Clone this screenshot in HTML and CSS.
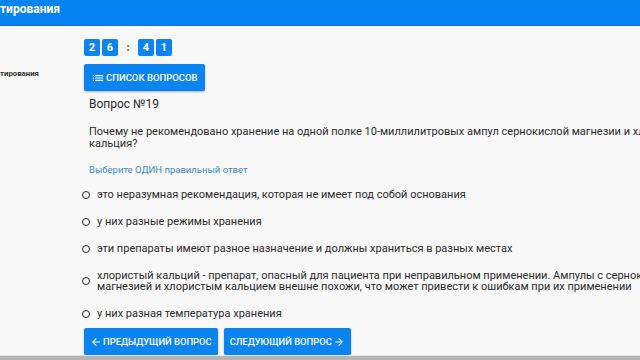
FILE: index.html
```html
<!DOCTYPE html>
<html>
	<head>
		<meta charset="utf-8">
		<title>Тестирование</title>
		<link rel="stylesheet" href="styles.css">
	</head>

	<body>
		<header class="topbar">
			<span class="topbar-title">тирования</span>
		</header>

		<main class="layout">
			<div class="side"></div>
			<div class="timer">
				<span class="digit">2</span><span class="digit">6</span>
				<span class="colon">:</span>
				<span class="digit">4</span><span class="digit">1</span>
			</div>

			<div class="side">
				<span class="side-label">тирования</span>
			</div>
			<div class="row-btn">
				<button class="btn">
					<svg class="ico ico-list" viewBox="0 0 24 24"><path d="M3 13h2v-2H3v2zm0 4h2v-2H3v2zm0-8h2V7H3v2zm4 4h14v-2H7v2zm0 4h14v-2H7v2zM7 7v2h14V7H7z"/></svg>Список вопросов
				</button>
			</div>

			<div class="side"></div>
			<div class="quiz">
				<p class="q-num">Вопрос №19</p>
				<p class="q-text">Почему не рекомендовано хранение на одной полке 10-миллилитровых ампул сернокислой магнезии и хлористого кальция?</p>
				<p class="q-hint">Выберите ОДИН правильный ответ</p>

				<ul class="answers">
					<li class="answer"><span class="radio"></span><span class="answer-text">это неразумная рекомендация, которая не имеет под собой основания</span></li>
					<li class="answer"><span class="radio"></span><span class="answer-text">у них разные режимы хранения</span></li>
					<li class="answer"><span class="radio"></span><span class="answer-text">эти препараты имеют разное назначение и должны храниться в разных местах</span></li>
					<li class="answer"><span class="radio"></span><span class="answer-text">хлористый кальций - препарат, опасный для пациента при неправильном применении. Ампулы с сернокислой магнезией и хлористым кальцием внешне похожи, что может привести к ошибкам при их применении</span></li>
					<li class="answer"><span class="radio"></span><span class="answer-text">у них разная температура хранения</span></li>
				</ul>

				<div class="nav">
					<button class="btn btn-nav">
						<svg class="ico" viewBox="0 0 24 24"><path d="M20 11H7.83l5.59-5.59L12 4l-8 8 8 8 1.41-1.41L7.83 13H20v-2z"/></svg>Предыдущий вопрос
					</button>
					<button class="btn btn-nav">
						Следующий вопрос<svg class="ico" viewBox="0 0 24 24"><path d="M12 4l-1.41 1.41L16.17 11H4v2h12.17l-5.58 5.59L12 20l8-8z"/></svg>
					</button>
				</div>
			</div>
		</main>

		<div class="taskbar"></div>
	</body>
</html>
```

FILE: styles.css
```css
html, body {
	margin: 0;
	height: 100%;
}

body {
	font-family: Roboto, "Noto Sans", sans-serif;
	color: #2b2b2b;
	background-color: #f8f8f8;
	overflow: hidden;
	display: flex;
	flex-direction: column;
}

.topbar {
	height: 25px;
	background-color: #0683f0;
	border-bottom: 1px solid #1470c0;
	display: flex;
	align-items: center;
	flex-shrink: 0;
}

.topbar-title {
	color: white;
	font-size: 12px;
	font-weight: 700;
	margin-top: -8px;
}

.layout {
	flex: 1;
	width: 705px;
	display: grid;
	grid-template-columns: 84px 1fr;
	align-content: start;
	padding-top: 13px;
}

.side {
	display: flex;
	align-items: center;
}

.side-label {
	font-size: 7.8px;
	font-weight: 700;
	color: #333;
}

.timer {
	display: flex;
	align-items: center;
	gap: 2px;
	height: 17px;
}

.digit {
	width: 16px;
	height: 17px;
	border-radius: 2px;
	background-color: #0a84f0;
	color: white;
	font-size: 11px;
	font-weight: 700;
	display: flex;
	align-items: center;
	justify-content: center;
}

.colon {
	width: 16px;
	text-align: center;
	font-size: 11px;
	font-weight: 700;
	color: #444;
}

.row-btn {
	padding-top: 8px;
}

.btn {
	font-family: Roboto, sans-serif;
	background-color: #0a84f0;
	color: white;
	border: none;
	border-radius: 2px;
	height: 27px;
	padding: 0 7px;
	font-size: 9.5px;
	font-weight: 500;
	text-transform: uppercase;
	display: inline-flex;
	align-items: center;
	gap: 1px;
	box-shadow: 0 1px 2px rgba(0, 0, 0, 0.3);
	cursor: pointer;
}

.btn-nav {
	font-size: 9.4px;
	padding: 0 6px;
}

.ico {
	width: 12px;
	height: 12px;
	fill: white;
}

.ico-list {
	width: 14px;
	height: 14px;
}

.quiz {
	padding-left: 5px;
}

.q-num {
	margin: 6px 0 0 0;
	font-size: 12px;
}

.q-text {
	margin: 15px 0 0 0;
	font-size: 11px;
	line-height: 12px;
}

.q-hint {
	margin: 14px 0 0 0;
	font-size: 9.5px;
	color: #3a8ad0;
}

.answers {
	list-style: none;
	margin: 6px 0 0 -7px;
	padding: 0;
}

.answer {
	display: flex;
	align-items: center;
	gap: 7px;
	padding: 8px 0;
}

.radio {
	width: 6px;
	height: 6px;
	border: 1.6px solid #222;
	border-radius: 50%;
	flex-shrink: 0;
}

.answer-text {
	font-size: 11px;
	line-height: 11px;
}

.nav {
	display: flex;
	gap: 6px;
	margin: 1px 0 0 -5px;
}

.taskbar {
	height: 4px;
	background-color: #b4b4b4;
	border-top: 1px solid #e4e4e4;
	flex-shrink: 0;
}
```
